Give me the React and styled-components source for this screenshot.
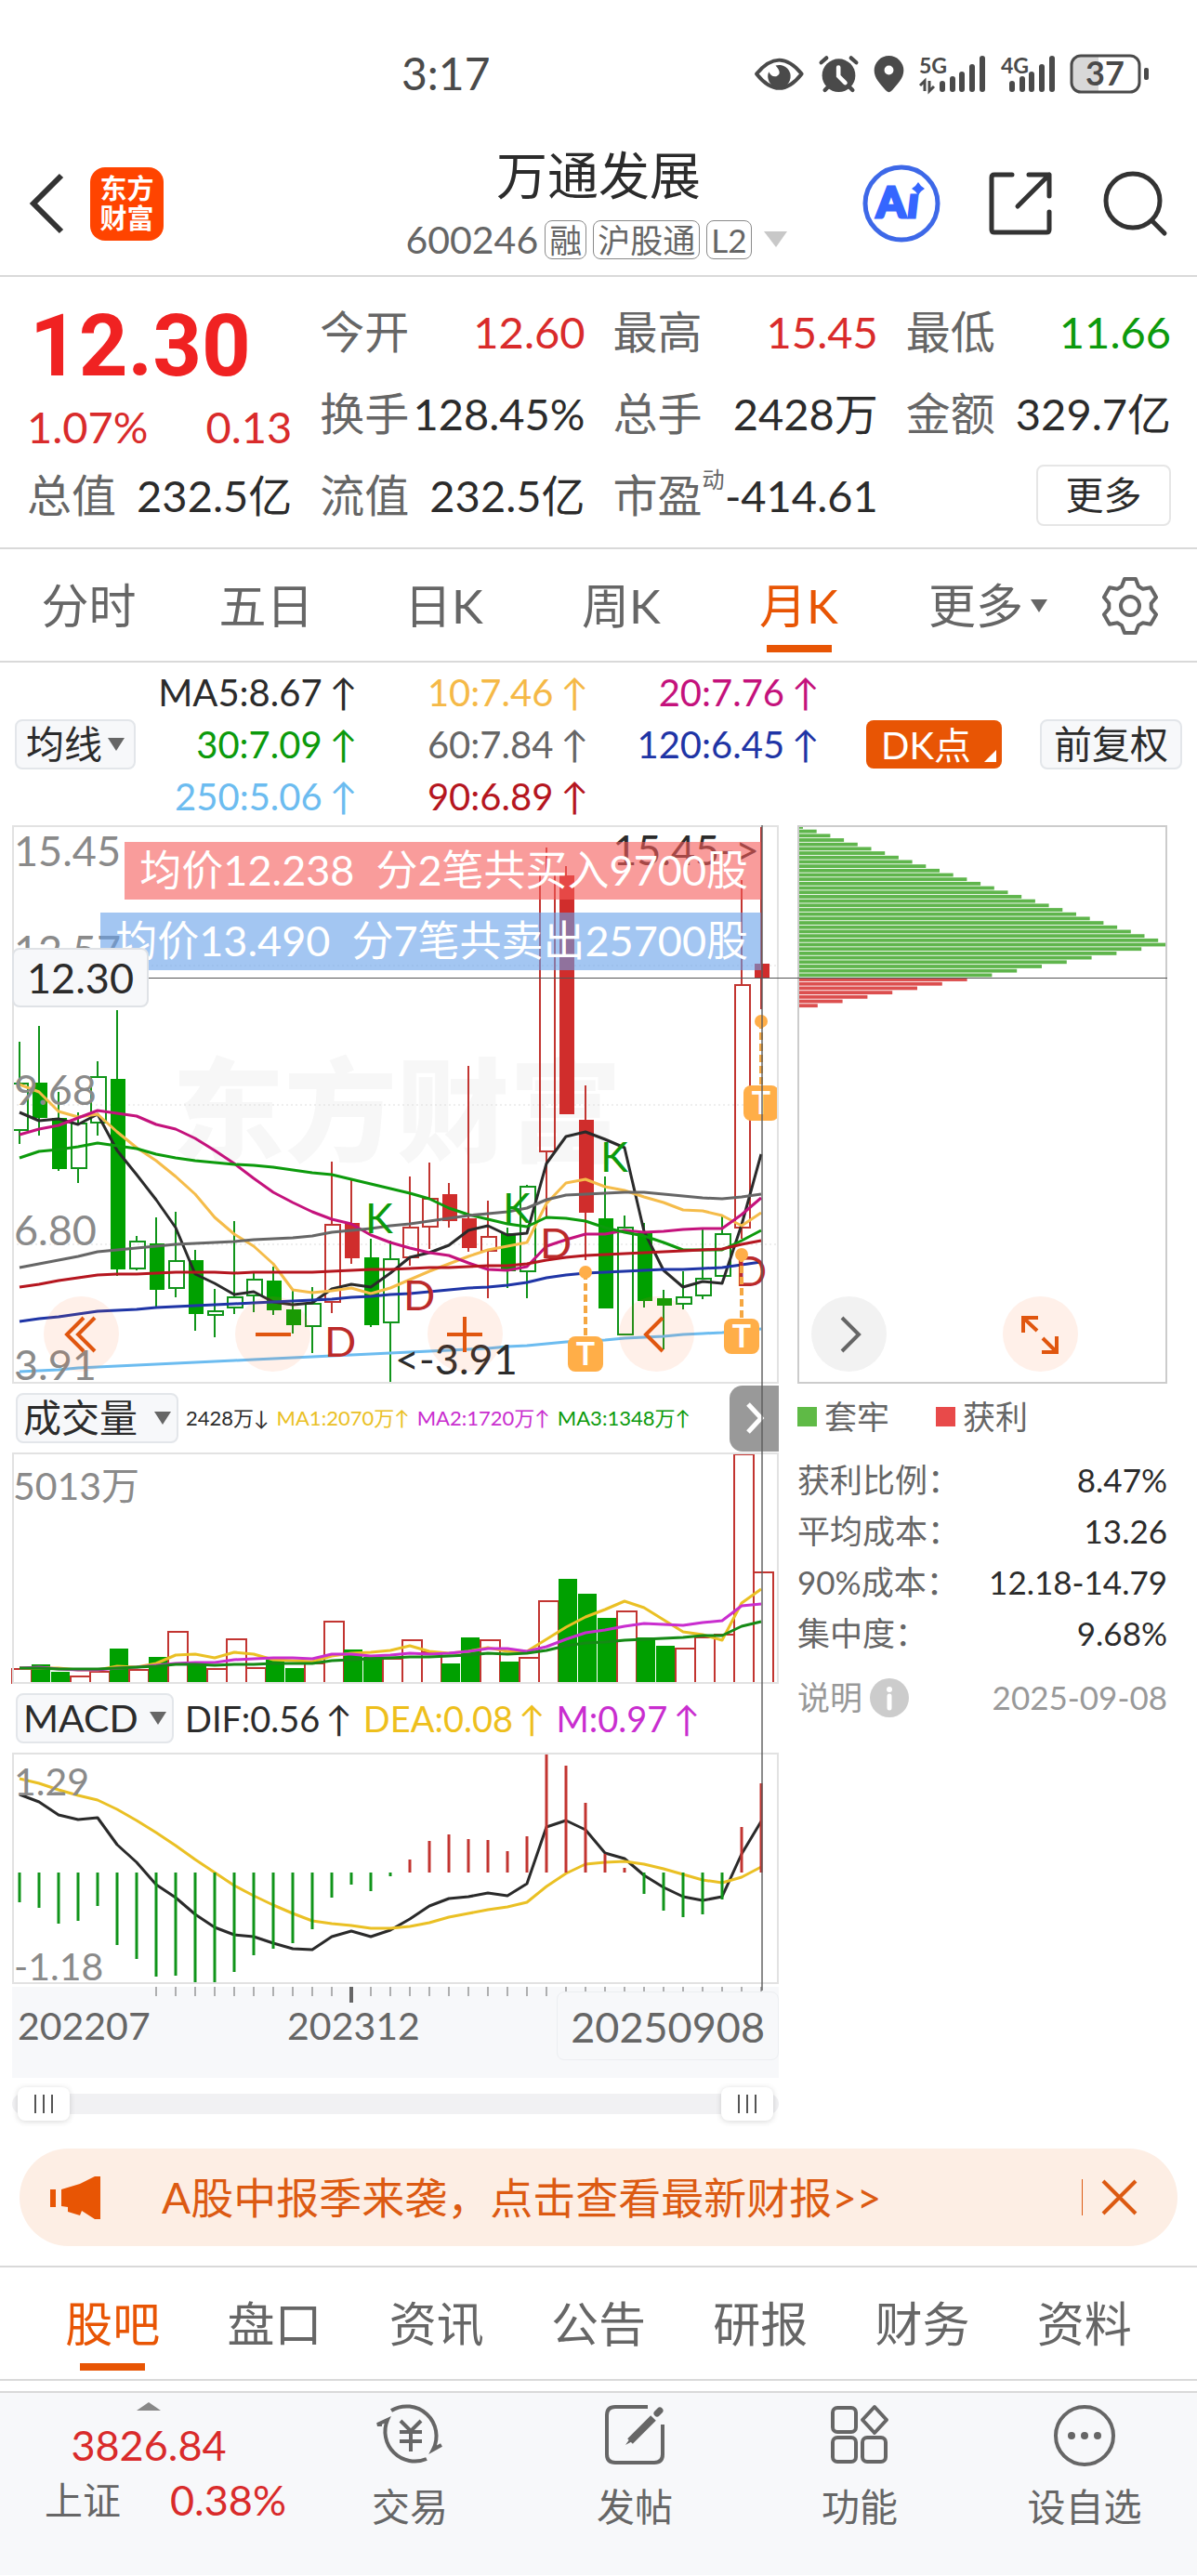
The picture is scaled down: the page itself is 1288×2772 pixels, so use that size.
import React, { useState } from 'react';
import styled, { createGlobalStyle, css } from 'styled-components';

const RED = '#d92b2b';
const GREEN = '#0c9a0c';
const ORANGE = '#e85504';
const DARK = '#2b2b2b';
const GRAY = '#666666';

const GlobalStyle = createGlobalStyle`
  * {
    box-sizing: border-box;
  }
  body {
    margin: 0;
    background: #ffffff;
    color: ${DARK};
    font-family: Lato, 'Liberation Sans', 'Noto Sans CJK SC', sans-serif;
  }
  button, select, input {
    font: inherit;
    color: inherit;
    margin: 0;
    padding: 0;
    border: 0;
    background: none;
  }
  a {
    color: inherit;
    text-decoration: none;
  }
  svg {
    display: block;
    flex: none;
    overflow: visible;
  }
`;

/* ---------- status bar ---------- */

const StatusBar = styled.div`
  display: flex;
  align-items: center;
  justify-content: space-between;
  height: 158px;
  padding: 0 51px 0 432px;
  color: #4a4a4a;
  font-size: 48px;
  line-height: 56px;
`;

const StatusIcons = styled.div`
  display: flex;
  align-items: center;
  gap: 16px;
`;

function StatusGlyphs() {
  return (
    <StatusIcons>
      <svg width="53" height="43" viewBox="45 50 160 130" fill="none">
        <path d="M51 115Q125 25 198 115Q125 208 51 115Z" stroke="#4a4a4a" strokeWidth="12" strokeLinejoin="round" />
        <path d="M113 88a37 37 0 1 1-22 20q8 18 24 15q22-8 -2-35z" fill="#4a4a4a" />
      </svg>
      <svg width="43" height="43" viewBox="250 50 130 130" fill="none" strokeLinecap="round">
        <circle cx="315" cy="120" r="54" fill="#4a4a4a" />
        <path d="M258 78L275 63M372 78L355 63M270 168L282 156M360 168L348 156" stroke="#4a4a4a" strokeWidth="13" />
        <path d="M314 94V122L336 144" stroke="#fff" strokeWidth="14" />
      </svg>
      <svg width="33" height="43" viewBox="424 50 100 130">
        <path fillRule="evenodd" fill="#4a4a4a" d="M474 56a48 48 0 0 1 48 48c0 26-20 44-37 64q-11 13-22 0c-17-20-37-38-37-64a48 48 0 0 1 48-48zm0 32a15 15 0 1 0 0 30a15 15 0 0 0 0-30z" />
      </svg>
      <svg width="72" height="43" viewBox="0 0 72 43">
        <text x="0" y="21" fontSize="23" fontWeight="700" fill="#4a4a4a">5G</text>
        <path d="M6 40V29L1 34M11 29V40L16 35" stroke="#4a4a4a" strokeWidth="3" fill="none" />
        <path d="M25 32V38M36 27V38M46 22V38M57 14V38M68 5V38" stroke="#4a4a4a" strokeWidth="6" strokeLinecap="round" />
      </svg>
      <svg width="58" height="43" viewBox="0 0 58 43">
        <text x="0" y="21" fontSize="23" fontWeight="700" fill="#4a4a4a">4G</text>
        <path d="M12 32V38M23 27V38M33 22V38M44 14V38M55 5V38" stroke="#4a4a4a" strokeWidth="6" strokeLinecap="round" />
      </svg>
      <svg width="86" height="43" viewBox="0 0 86 43">
        <path d="M12 2H31V41H12Q2 41 2 31V12Q2 2 12 2Z" fill="#d8d8d8" />
        <rect x="2" y="2" width="73" height="39" rx="10" fill="none" stroke="#4a4a4a" strokeWidth="3" />
        <rect x="80" y="15" width="5" height="13" rx="2" fill="#4a4a4a" />
        <text x="38" y="34" fontSize="36" fontWeight="700" textAnchor="middle" fill="#4a4a4a">37</text>
      </svg>
    </StatusIcons>
  );
}

/* ---------- header ---------- */

const Header = styled.header`
  display: grid;
  grid-template-columns: 1fr auto 1fr;
  align-items: center;
  height: 140px;
  padding: 0 32px;
  border-bottom: 2px solid #d9d9d9;
`;

const HeaderSide = styled.div`
  display: flex;
  align-items: center;
  justify-content: ${(p) => (p.$end ? 'flex-end' : 'flex-start')};
  gap: ${(p) => (p.$end ? '52px' : '29px')};
  padding-bottom: 16px;
`;

const IconButton = styled.button`
  display: flex;
  cursor: pointer;
`;

const Brand = styled.div`
  display: flex;
  flex-direction: column;
  align-items: center;
  justify-content: center;
  width: 79px;
  height: 79px;
  border-radius: 16px;
  background: #ff4400;
  color: #fff;
  font-size: 29px;
  font-weight: 700;
  line-height: 32px;
`;

const Title = styled.h1`
  margin: 0;
  font-size: 55px;
  font-weight: 400;
  line-height: 60px;
  text-align: center;
`;

const SubTitle = styled.div`
  display: flex;
  align-items: center;
  gap: 7px;
  height: 44px;
  margin: 18px 0 16px;
  color: ${GRAY};
  font-size: 41px;
  line-height: 44px;
`;

const Badge = styled.span`
  height: 42px;
  padding: 0 4px;
  border: 1px solid #8a8a8a;
  border-radius: 8px;
  font-size: 35px;
  line-height: 40px;
`;

function TopHeader() {
  return (
    <Header>
      <HeaderSide>
        <IconButton aria-label="返回">
          <svg width="36" height="64" viewBox="0 0 36 64" fill="none" stroke="#333" strokeWidth="6">
            <path d="M34 2L4 32L34 62" />
          </svg>
        </IconButton>
        <Brand>
          <span>东方</span>
          <span>财富</span>
        </Brand>
      </HeaderSide>
      <div>
        <Title>万通发展</Title>
        <SubTitle>
          <span>600246</span>
          <Badge>融</Badge>
          <Badge>沪股通</Badge>
          <Badge>L2</Badge>
          <svg width="36" height="18" viewBox="-6 0 36 18">
            <path d="M0 0H25L13 17Z" fill="#c8c8c8" />
          </svg>
        </SubTitle>
      </div>
      <HeaderSide $end>
        <IconButton aria-label="AI">
          <svg width="84" height="84" viewBox="0 0 84 84">
            <circle cx="42" cy="42" r="39" fill="none" stroke="#3d68e8" strokeWidth="5" />
            <g fill="#3566ff" fontFamily="Lato" fontWeight="900" fontSize="45">
              <text x="15" y="57" stroke="#3566ff" strokeWidth="3">A</text>
              <text x="49" y="57" stroke="#3566ff" strokeWidth="3" fontStyle="italic">ı</text>
            </g>
            <path d="M60 19L63 23L67 26L63 29L60 33L57 29L53 26L57 23Z" fill="#3566ff" />
          </svg>
        </IconButton>
        <IconButton aria-label="分享">
          <svg width="68" height="68" viewBox="0 0 68 68" fill="none" stroke="#333" strokeWidth="5" strokeLinecap="round" strokeLinejoin="round">
            <path d="M25 3H6Q3 3 3 6V62Q3 65 6 65H62Q65 65 65 62V43M43 3H65V26M65 3L31 37" />
          </svg>
        </IconButton>
        <IconButton aria-label="搜索">
          <svg width="72" height="70" viewBox="0 0 72 70" fill="none" stroke="#333" strokeWidth="5" strokeLinecap="round">
            <circle cx="35" cy="32" r="29" />
            <path d="M56 54L69 67" />
          </svg>
        </IconButton>
      </HeaderSide>
    </Header>
  );
}

/* ---------- quote ---------- */

const Quote = styled.section`
  display: grid;
  grid-template-columns: repeat(4, 1fr);
  grid-auto-rows: 88px;
  column-gap: 30px;
  padding: 15px 28px 12px 29px;
  border-bottom: 2px solid #d9d9d9;
`;

const Price = styled.div`
  grid-row: span 2;
  display: flex;
  flex-direction: column;
  color: ${RED};
`;

const LastPrice = styled.strong`
  padding: 14px 0 0 3px;
  color: #f02222;
  font-family: Roboto, sans-serif;
  font-size: 92px;
  font-weight: 700;
  line-height: 92px;
`;

const Change = styled.div`
  display: flex;
  justify-content: space-between;
  padding-top: 10px;
  font-size: 47px;
  line-height: 60px;
`;

const Stat = styled.div`
  display: flex;
  align-items: center;
  justify-content: space-between;
  white-space: nowrap;
  font-size: 48px;
  line-height: 60px;

  b {
    color: ${(p) => p.$color || DARK};
    font-size: 47px;
    font-weight: 400;
  }
  span {
    color: ${GRAY};
  }
  sup {
    color: ${GRAY};
    font-size: 24px;
    line-height: 24px;
    vertical-align: 26px;
  }
`;

const MoreButton = styled.button`
  align-self: center;
  justify-self: end;
  width: 145px;
  height: 66px;
  border: 2px solid #e6e6e6;
  border-radius: 8px;
  font-size: 41px;
  line-height: 60px;
`;

/* ---------- tabs ---------- */

const PeriodTabs = styled.nav`
  display: grid;
  grid-template-columns: repeat(5, 191fr) 216fr 90fr;
  height: 122px;
  padding-right: 27px;
  border-bottom: 2px solid #d9d9d9;
`;

const NewsTabs = styled.nav`
  display: grid;
  grid-template-columns: repeat(7, 1fr);
  height: 124px;
  padding: 0 34px;
  border: solid #d9d9d9;
  border-width: 2px 0;
`;

const Tab = styled.button`
  display: flex;
  align-items: center;
  justify-content: center;
  gap: 8px;
  padding-top: 2px;
  color: ${GRAY};
  font-size: 51px;
  line-height: 60px;
  cursor: pointer;
  ${(p) =>
    p.$active &&
    css`
      color: ${ORANGE};
      background: linear-gradient(${ORANGE}, ${ORANGE}) center bottom 9px / 70px 8px no-repeat;
    `}
`;

const periods = ['分时', '五日', '日K', '周K', '月K'];
const newsTabs = ['股吧', '盘口', '资讯', '公告', '研报', '财务', '资料'];

// six teeth, walked clockwise from the top one
const gearPoints = Array.from({ length: 6 }, (_, k) => {
  const a = (k * Math.PI) / 3;
  return [[-9, -21], [-6, -29], [6, -29], [9, -21]]
    .map(([x, y]) => [x * Math.cos(a) - y * Math.sin(a), x * Math.sin(a) + y * Math.cos(a)])
    .map((p) => p.map((n) => n.toFixed(1)).join(','))
    .join(' ');
}).join(' ');

const Caret = ({ size = 18, color = GRAY }) => (
  <svg width={size} height={size - 4} viewBox="0 0 18 14">
    <path d="M0 0H18L9 14Z" fill={color} />
  </svg>
);

/* ---------- indicator bar ---------- */

const AverageBar = styled.div`
  display: grid;
  grid-template-columns: auto 1fr auto auto;
  align-items: center;
  height: 175px;
  padding: 0 16px;
  font-size: 40px;
`;

const SelectBox = styled.label`
  position: relative;
  display: flex;
  flex: none;
  align-items: center;
  gap: ${(p) => p.$gap || 6}px;
  height: 54px;
  padding: 0 ${(p) => (p.$gap ? 6 : 10)}px;
  border: 2px solid #e3e6ea;
  border-radius: 8px;
  background: #f7f8fa;
  font-size: 41px;

  select {
    appearance: none;
    line-height: 50px;
    outline: none;
  }
`;

const AverageList = styled.div`
  display: grid;
  grid-template-columns: 238fr 248fr 248fr;
  margin-right: 50px;
  line-height: 56px;
  text-align: right;
`;

const Reading = styled.span`
  display: inline-flex;
  justify-content: flex-end;
  gap: ${(p) => p.$gap ?? 8}px;
  color: ${(p) => p.$color};
  white-space: nowrap;
`;

const DkButton = styled.button`
  display: flex;
  align-items: flex-end;
  gap: 14px;
  height: 52px;
  margin-right: 41px;
  padding: 0 6px 0 16px;
  border-radius: 8px;
  background: ${ORANGE};
  color: #fff;
  line-height: 50px;

  svg {
    margin-bottom: 7px;
  }
`;

const AdjustButton = styled.button`
  height: 54px;
  padding: 0 13px;
  border: 2px solid #e3e6ea;
  border-radius: 8px;
  background: #f7f8fa;
  font-size: 41px;
  line-height: 48px;
`;

const averages = [
  ['MA5:8.67', DARK],
  ['10:7.46', '#f5b947'],
  ['20:7.76', '#c4127c'],
  ['30:7.09', GREEN],
  ['60:7.84', GRAY],
  ['120:6.45', '#1f35a6'],
  ['250:5.06', '#6cbcf0'],
  ['90:6.89', '#b5161f'],
];

/* ---------- chart data ---------- */

const STEP = 21;
const cx = (i) => 8 + STEP * i;

// [kind, high, top, bottom, low]; upper case is a solid body
const candles = [
  ['g', 233, 277, 329, 343], ['G', 216, 277, 315, 334], ['G', 287, 315, 370, 372], ['g', 309, 320, 370, 385],
  ['g', 254, 270, 321, 334], ['G', 199, 273, 478, 485], ['g', 442, 447, 478, 479], ['G', 422, 450, 500, 518],
  ['g', 416, 468, 499, 508], ['G', 457, 468, 526, 544], ['g', 499, 522, 528, 551], ['g', 426, 507, 520, 526],
  ['g', 482, 488, 507, 524], ['G', 475, 490, 522, 527], ['G', 501, 521, 538, 547], ['g', 497, 514, 540, 568],
  ['r', 362, 429, 514, 525], ['R', 381, 428, 466, 472], ['G', 445, 465, 538, 540], ['g', 447, 466, 536, 601],
  ['r', 378, 432, 466, 474], ['r', 363, 401, 433, 456], ['R', 385, 397, 426, 433], ['R', 259, 423, 455, 459],
  ['r', 404, 442, 459, 509], ['G', 433, 439, 480, 498], ['g', 387, 388, 481, 509], ['r', 24, 51, 352, 423],
  ['R', 44, 54, 311, 311], ['R', 280, 317, 417, 468], ['G', 378, 423, 520, 520], ['g', 420, 432, 549, 549],
  ['G', 428, 439, 512, 519], ['G', 500, 509, 517, 564], ['g', 480, 507, 516, 521], ['g', 433, 487, 507, 510],
  ['g', 421, 439, 486, 486], ['r', 59, 171, 434, 445], ['R', 0, 149, 164, 198],
];

const priceLines = [
  ['#2a2a2a', [309, 318, 316, 322, 311, 350, 376, 403, 433, 483, 493, 505, 502, 513, 516, 514, 499, 494, 497, 482, 465, 460, 452, 436, 431, 441, 439, 364, 335, 330, 338, 347, 437, 479, 497, 491, 493, 430, 354]],
  ['#f5bc4a', [279, 287, 308, 314, 311, 330, 347, 361, 378, 397, 422, 440, 453, 472, 500, 503, 501, 498, 504, 498, 489, 480, 472, 464, 457, 453, 449, 407, 385, 381, 389, 393, 400, 406, 414, 415, 420, 431, 417]],
  ['#c4127c', [333, 327, 323, 315, 307, 310, 313, 322, 327, 337, 350, 364, 380, 395, 406, 416, 424, 429, 441, 449, 455, 460, 463, 471, 478, 479, 475, 453, 446, 440, 440, 436, 438, 437, 435, 434, 434, 419, 401]],
  ['#0c9a0c', [358, 351, 349, 346, 342, 345, 348, 354, 358, 361, 363, 365, 366, 368, 371, 374, 376, 381, 386, 391, 396, 402, 412, 419, 424, 429, 432, 422, 423, 426, 433, 438, 442, 449, 457, 457, 457, 447, 436]],
  ['#666666', [476, 472, 468, 464, 459, 457, 455, 453, 451, 450, 449, 448, 446, 445, 444, 442, 438, 436, 434, 431, 429, 426, 423, 420, 418, 416, 412, 403, 398, 397, 396, 395, 395, 397, 399, 401, 402, 400, 397]],
  ['#b5161f', [497, 494, 490, 487, 484, 483, 483, 482, 481, 481, 481, 482, 481, 481, 481, 481, 480, 479, 478, 478, 477, 476, 476, 475, 474, 474, 472, 468, 465, 463, 462, 461, 460, 459, 458, 457, 456, 451, 447]],
  ['#1f35a6', [534, 531, 529, 526, 523, 522, 521, 519, 518, 517, 516, 515, 514, 513, 512, 511, 510, 508, 507, 505, 504, 502, 500, 498, 497, 495, 492, 487, 484, 482, 481, 480, 479, 478, 478, 477, 476, 473, 470]],
  ['#6cbcf0', [588, 587, 586, 584, 583, 582, 581, 580, 579, 578, 577, 576, 575, 574, 573, 572, 571, 570, 569, 568, 567, 566, 565, 564, 563, 561, 560, 558, 556, 555, 554, 552, 551, 550, 548, 547, 546, 544, 542]],
];

const volumeKinds = 'rggrrgrgrgrrrggrrggrrrggrgrrgggrggrrrrr';
const volumeTops = [232, 228, 236, 240, 235, 211, 233, 220, 192, 229, 232, 200, 231, 223, 232, 226, 181, 212, 220, 221, 201, 214, 227, 199, 201, 225, 220, 159, 136, 152, 178, 170, 199, 208, 210, 198, 195, 1, 128];
const volumeLines = [
  ['#eac024', [232, 232, 232, 234, 234, 230, 231, 227, 218, 217, 221, 215, 217, 223, 224, 225, 219, 216, 215, 213, 208, 214, 216, 214, 210, 214, 214, 201, 188, 177, 169, 160, 167, 180, 193, 196, 202, 162, 147]],
  ['#c92ecf', [232, 231, 233, 234, 234, 232, 231, 229, 227, 226, 226, 223, 222, 221, 221, 222, 217, 217, 219, 218, 216, 217, 216, 214, 211, 211, 214, 209, 201, 194, 191, 187, 184, 185, 186, 183, 181, 165, 163]],
  ['#158a15', [232, 232, 233, 233, 233, 232, 231, 230, 228, 228, 229, 228, 228, 227, 227, 227, 224, 223, 222, 221, 220, 220, 219, 218, 216, 217, 216, 213, 208, 205, 204, 202, 201, 200, 199, 197, 197, 187, 182]],
];

const MACD_ZERO = 129;
const macdBars = [161, 167, 184, 181, 165, 207, 222, 241, 240, 249, 247, 236, 218, 211, 205, 190, 156, 142, 149, 133, 115, 95, 88, 93, 94, 106, 90, 0, 14, 54, 109, 124, 152, 170, 177, 174, 158, 80, 33];
const macdLines = [
  ['#2a2a2a', [45, 53, 67, 72, 70, 99, 118, 142, 156, 174, 188, 196, 198, 205, 211, 212, 198, 192, 198, 191, 179, 165, 157, 155, 151, 154, 141, 80, 73, 83, 108, 114, 132, 145, 155, 159, 155, 109, 74]],
  ['#eac024', [28, 33, 40, 46, 51, 61, 73, 86, 100, 115, 129, 143, 154, 164, 173, 181, 184, 186, 189, 189, 187, 183, 177, 173, 169, 166, 161, 144, 130, 120, 118, 117, 120, 125, 131, 137, 140, 134, 123]],
];

const marks = [
  ['K', 382, 439], ['K', 530, 428], ['K', 635, 373],
  ['D', 338, 572], ['D', 423, 522], ['D', 570, 466], ['D', 780, 496],
];

// [x, dot y, box y]
const trades = [[806, 211, 280], [617, 481, 550], [785, 462, 531]];

const Line = ({ color, values }) => (
  <polyline
    points={values.map((v, i) => `${cx(i)},${v}`).join(' ')}
    fill="none"
    stroke={color}
    strokeWidth="3"
    strokeLinejoin="round"
  />
);

/* ---------- chart layout ---------- */

const Charts = styled.section`
  position: relative;
  display: grid;
  grid-template-columns: minmax(0, 825fr) minmax(0, 398fr);
  column-gap: 20px;
  padding: 0 32px 0 13px;
`;

const Frame = styled.div`
  position: relative;
  outline: 2px solid ${(p) => p.$line || '#e2e2e2'};
  outline-offset: -2px;

  > svg {
    width: 100%;
    height: auto;
  }
`;

const Plots = styled.div`
  position: relative;
`;

const CrossV = styled.i`
  position: absolute;
  z-index: 1;
  top: 0;
  bottom: 94px;
  left: 97.7%;
  width: 2px;
  background: rgba(90, 90, 90, 0.7);
`;

const CrossH = styled.i`
  position: absolute;
  z-index: 1;
  top: 164px;
  left: 13px;
  right: 32px;
  height: 1px;
  background: #555;
`;

const PriceTag = styled.span`
  position: absolute;
  z-index: 2;
  top: 22%;
  left: 0;
  height: 64px;
  padding: 0 14px;
  border: 2px solid #dfe2e6;
  border-radius: 8px;
  background: #f7f8fa;
  font-size: 45px;
  line-height: 60px;
`;

const TradeNote = styled.div`
  position: absolute;
  top: ${(p) => (p.$sell ? '94px' : '18px')};
  right: 19px;
  height: 62px;
  padding: 0 14px 0 16px;
  background: ${(p) => (p.$sell ? 'rgba(102, 160, 233, 0.6)' : 'rgba(245, 90, 88, 0.6)')};
  color: #fff;
  font-size: 45px;
  line-height: 60px;
  white-space: pre;
`;

const ChartTools = styled.div`
  position: absolute;
  z-index: 3;
  top: 507px;
  left: 47px;
  right: 128px;
  display: flex;
  justify-content: space-between;
`;

const RoundButton = styled.button`
  display: flex;
  align-items: center;
  justify-content: center;
  width: 81px;
  height: 81px;
  border-radius: 50%;
  background: ${(p) => (p.$muted ? '#f2f2f2' : 'rgba(255, 110, 40, 0.1)')};
`;

const tools = [
  ['最早', 'M26 6L8 24L26 42M38 6L20 24L38 42'],
  ['缩小', 'M5 24H43'],
  ['放大', 'M5 24H43M24 5V43'],
  ['向左', 'M30 6L12 24L30 42'],
  ['向右', 'M17 6L35 24L17 42'],
  ['全屏', 'M6 22V6H22M6 6L21 20M42 26V43H26M42 43L27 28'],
];

const Toolbar = styled.div`
  display: flex;
  align-items: center;
  gap: ${(p) => p.$gap}px;
  height: 74px;
  padding-left: 4px;
  font-size: ${(p) => p.$size}px;
  line-height: 50px;
`;

const Expand = styled.button`
  display: flex;
  flex: none;
  align-items: center;
  justify-content: center;
  width: 53px;
  height: 71px;
  margin-left: auto;
  border-radius: 14px 0 0 14px;
  background: #999;
`;

const Axis = styled.div`
  position: relative;
  display: flex;
  justify-content: space-between;
  height: 98px;
  margin-top: 3px;
  padding: 5px 0 0 6px;
  background: #f7f8fa;
  color: ${GRAY};
  font-size: 41px;
  line-height: 74px;

  svg {
    position: absolute;
    top: 0;
    left: 0;
    width: 100%;
    height: auto;
  }
`;

const CurrentDate = styled.strong`
  position: relative;
  height: 74px;
  padding: 0 14px;
  border: 1px solid #eceef1;
  border-radius: 8px;
  background: #f7f8fa;
  font-size: 45px;
  font-weight: 400;
`;

const RangeTrack = styled.div`
  position: relative;
  height: 22px;
  margin-top: 17px;
  border-radius: 11px;
  background: #f1f1f3;
`;

const RangeInput = styled.input`
  position: absolute;
  top: -7px;
  left: 6px;
  width: calc(100% - 12px);
  height: 36px;
  appearance: none;
  pointer-events: none;

  &::-webkit-slider-thumb {
    appearance: none;
    width: 56px;
    height: 36px;
    border-radius: 8px;
    pointer-events: auto;
    box-shadow: 0 1px 6px rgba(0, 0, 0, 0.16);
    background:
      linear-gradient(#555, #555) 18px center / 2px 20px no-repeat,
      linear-gradient(#555, #555) 27px center / 2px 20px no-repeat,
      linear-gradient(#555, #555) 36px center / 2px 20px no-repeat,
      #fff;
  }
`;

const CostPanel = styled.div`
  color: ${GRAY};
  font-size: 35px;
  line-height: 55px;
`;

const Legend = styled.div`
  display: flex;
  gap: 50px;
  padding: 8px 0 13px;
`;

const LegendItem = styled.span`
  display: flex;
  align-items: center;
  gap: 8px;

  &::before {
    content: '';
    width: 21px;
    height: 21px;
    background: ${(p) => p.$color};
  }
`;

const CostRow = styled.div`
  display: flex;
  align-items: center;
  justify-content: space-between;
  white-space: nowrap;

  b {
    color: ${DARK};
    font-weight: 400;
  }
`;

const NoteRow = styled(CostRow)`
  margin-top: 14px;
  color: #999;

  span {
    display: flex;
    align-items: center;
    gap: 8px;
  }
`;

const costs = [
  ['获利比例：', '8.47%'],
  ['平均成本：', '13.26'],
  ['90%成本：', '12.18-14.79'],
  ['集中度：', '9.68%'],
];

function PriceChart() {
  return (
    <Frame>
      <svg viewBox="0 0 825 601">
        <text x="172" y="352" fontSize="121" fontWeight="900" fill="#f7f7f7">东方财富</text>
        {[151, 301, 451].map((y) => (
          <path key={y} d={`M0 ${y}H825`} stroke="#dedede" strokeWidth="1" strokeDasharray="2 3" />
        ))}
        {candles.map(([kind, high, top, bottom, low], i) => {
          const up = kind.toLowerCase() === 'r';
          const color = up ? '#c23531' : '#10941a';
          const solid = kind === kind.toUpperCase();
          return (
            <g key={i} stroke={color} strokeWidth="2">
              <path d={`M${cx(i)} ${high}V${top}M${cx(i)} ${bottom}V${low}`} />
              {solid ? (
                <rect x={cx(i) - 7} y={top} width="16" height={bottom - top} fill={up ? '#d02d2c' : '#00a000'} stroke="none" />
              ) : (
                <rect x={cx(i) - 7} y={top + 1} width="16" height={Math.max(bottom - top - 2, 2)} fill="none" />
              )}
            </g>
          );
        })}
        {priceLines.map(([color, values]) => <Line key={color} color={color} values={values} />)}
        <g fontSize="45">
          {marks.map(([letter, x, y]) => (
            <text key={x} x={x - 2} y={y} fill={letter === 'K' ? GREEN : '#bb2a2a'}>{letter}</text>
          ))}
        </g>
        <g fontSize="45" fill="#8a8a8a">
          <text x="2" y="44">15.45</text>
          <text x="2" y="151">12.57</text>
          <text x="2" y="301">9.68</text>
          <text x="2" y="452">6.80</text>
          <text x="2" y="597">3.91</text>
        </g>
        <g fontSize="45" fill={DARK}>
          <text x="804" y="43" textAnchor="end">15.45-&gt;</text>
          <text x="412" y="591">&lt;-3.91</text>
        </g>
        {trades.map(([x, dot, box]) => (
          <g key={x}>
            <path d={`M${x} ${dot}V${box}`} stroke="#f5a742" strokeWidth="4" strokeDasharray="8 4" />
            <circle cx={x} cy={dot} r="7" fill="#ffae48" />
            <rect x={x - 19} y={box} width="38" height="38" rx="8" fill="#ffae48" />
            <text x={x} y={box + 31} fontSize="34" fontWeight="700" textAnchor="middle" fill="#fff">T</text>
          </g>
        ))}
      </svg>
      <TradeNote>均价12.238  分2笔共买入9700股</TradeNote>
      <TradeNote $sell>均价13.490  分7笔共卖出25700股</TradeNote>
      <PriceTag>12.30</PriceTag>
    </Frame>
  );
}

function VolumeChart() {
  return (
    <Frame>
      <svg viewBox="0 0 825 249">
        {volumeTops.map((top, i) =>
          volumeKinds[i] === 'g' ? (
            <rect key={i} x={cx(i) - 8} y={top} width="20" height={249 - top} fill="#00a000" />
          ) : (
            <rect key={i} x={cx(i) - 8} y={top + 1} width="21" height={247 - top} fill="#fff" stroke="#c23531" strokeWidth="2" />
          )
        )}
        {volumeLines.map(([color, values]) => <Line key={color} color={color} values={values} />)}
        <text x="1" y="51" fontSize="41" fill="#8a8a8a">5013万</text>
      </svg>
    </Frame>
  );
}

function MacdChart() {
  return (
    <Frame>
      <svg viewBox="0 0 825 249">
        {macdLines.map(([color, values]) => <Line key={color} color={color} values={values} />)}
        {macdBars.map((v, i) => (
          <path key={i} d={`M${cx(i)} ${MACD_ZERO}V${v}`} stroke={v > MACD_ZERO ? '#10941a' : '#c23531'} strokeWidth="3" />
        ))}
        <text x="2" y="46" fontSize="41" fill="#8a8a8a">1.29</text>
        <text x="2" y="245" fontSize="41" fill="#8a8a8a">-1.18</text>
      </svg>
    </Frame>
  );
}

function CostChart() {
  const rows = Array.from({ length: 42 }, (_, i) => (i < 27 ? 5 + 14.7 * i : 396 - 26.8 * (i - 27)));
  return (
    <Frame $line="#cccccc">
      <svg viewBox="0 0 398 601">
        {rows.map((w, i) => (
          <rect key={i} x="1" y={4.69 * i} width={w} height="3.8" fill={i < 35 ? '#5fb54c' : '#dc4f4f'} />
        ))}
      </svg>
    </Frame>
  );
}

/* ---------- promo and bottom bar ---------- */

const Promo = styled.div`
  display: flex;
  align-items: center;
  height: 105px;
  margin: 37px 21px 21px;
  padding: 0 43px 0 33px;
  border-radius: 53px;
  background: #fdeee4;
  color: #dc5a12;
  font-size: 46px;
  line-height: 60px;

  a {
    flex: 1;
    margin-left: 64px;
  }
`;

const CloseButton = styled.button`
  display: flex;
  padding-left: 20px;
  border-left: 1px solid #dc5a12;
`;

const BottomBar = styled.footer`
  display: grid;
  grid-template-columns: 320fr repeat(4, 242fr);
  height: 198px;
  margin-top: 11px;
  border-top: 2px solid #d9d9d9;
  background: #f7f8fa;
  color: ${GRAY};
  font-size: 41px;
`;

const IndexCard = styled.div`
  display: flex;
  flex-direction: column;
  align-items: center;
  padding-top: 10px;
  line-height: 59px;

  svg {
    margin-bottom: 8px;
  }
`;

const IndexValue = styled.span`
  color: ${RED};
  font-size: 45px;
`;

const IndexRow = styled.div`
  display: flex;
  justify-content: space-between;
  align-self: stretch;
  padding: 0 12px 0 48px;
`;

const NavButton = styled.button`
  display: flex;
  flex-direction: column;
  align-items: center;
  gap: 13px;
  padding-top: 10px;
  line-height: 56px;
`;

const navItems = [
  ['交易', (
    <>
      <path d="M17 9A32 32 0 0 1 62 51L71 46M7 24L2 24L13 19A32 32 0 0 0 55 61" transform="translate(-1 0)" />
      <path d="M26 20L37 31L48 20M25 32H49M25 42H49M37 31V53" />
    </>
  )],
  ['发帖', (
    <>
      <path d="M50 5H15Q6 5 6 14V56Q6 65 15 65H57Q66 65 66 56V24" />
      <path d="M56 17L31 42" strokeWidth="8" />
      <path d="M33 36L26 46L37 40Z" fill={GRAY} stroke="none" />
      <path d="M60 12L63 9" strokeWidth="7" strokeLinecap="round" />
    </>
  )],
  ['功能', (
    <>
      <rect x="7" y="6" width="25" height="26" rx="5" />
      <rect x="7" y="38" width="25" height="26" rx="5" />
      <rect x="39" y="38" width="25" height="26" rx="5" />
      <path d="M52 5L65 19L52 33L39 19Z" strokeLinejoin="round" />
    </>
  )],
  ['设自选', (
    <>
      <circle cx="36" cy="36" r="31" />
      <g fill={GRAY} stroke="none">
        <circle cx="22" cy="36" r="4" />
        <circle cx="36" cy="36" r="4" />
        <circle cx="50" cy="36" r="4" />
      </g>
    </>
  )],
];

export default function App() {
  const [period, setPeriod] = useState('月K');
  const [news, setNews] = useState('股吧');

  return (
    <>
      <GlobalStyle />
      <StatusBar>
        <span>3:17</span>
        <StatusGlyphs />
      </StatusBar>
      <TopHeader />

      <Quote>
        <Price>
          <LastPrice>12.30</LastPrice>
          <Change>
            <span>1.07%</span>
            <span>0.13</span>
          </Change>
        </Price>
        <Stat $color={RED}><span>今开</span><b>12.60</b></Stat>
        <Stat $color={RED}><span>最高</span><b>15.45</b></Stat>
        <Stat $color={GREEN}><span>最低</span><b>11.66</b></Stat>
        <Stat><span>换手</span><b>128.45%</b></Stat>
        <Stat><span>总手</span><b>2428万</b></Stat>
        <Stat><span>金额</span><b>329.7亿</b></Stat>
        <Stat><span>总值</span><b>232.5亿</b></Stat>
        <Stat><span>流值</span><b>232.5亿</b></Stat>
        <Stat><span>市盈<sup>动</sup></span><b>-414.61</b></Stat>
        <MoreButton>更多</MoreButton>
      </Quote>

      <PeriodTabs>
        {periods.map((name) => (
          <Tab key={name} $active={name === period} onClick={() => setPeriod(name)}>{name}</Tab>
        ))}
        <Tab>更多<Caret /></Tab>
        <Tab aria-label="设置">
          <svg width="64" height="64" viewBox="-32 -32 64 64" fill="none" stroke={GRAY} strokeWidth="4" strokeLinejoin="round">
            <polygon points={gearPoints} />
            <circle r="10" />
          </svg>
        </Tab>
      </PeriodTabs>

      <AverageBar>
        <SelectBox>
          <select aria-label="主图指标"><option>均线</option></select>
          <Caret />
        </SelectBox>
        <AverageList>
          {averages.map(([text, color]) => (
            <Reading key={text} $color={color}>{text}<span>↑</span></Reading>
          ))}
        </AverageList>
        <DkButton>
          DK点
          <svg width="13" height="13" viewBox="0 0 13 13"><path d="M13 0V13H0Z" fill="#fff" /></svg>
        </DkButton>
        <AdjustButton>前复权</AdjustButton>
      </AverageBar>

      <Charts>
        <CrossH />
        <div>
          <Plots>
            <CrossV />
            <PriceChart />
            <Toolbar $size={22} $gap={8}>
              <SelectBox $gap={18}>
                <select aria-label="副图指标一"><option>成交量</option></select>
                <Caret />
              </SelectBox>
              <Reading $gap={0} $color={DARK}>2428万↓</Reading>
              <Reading $gap={0} $color="#eac024">MA1:2070万↑</Reading>
              <Reading $gap={0} $color="#c92ecf">MA2:1720万↑</Reading>
              <Reading $gap={0} $color={GREEN}>MA3:1348万↑</Reading>
              <Expand aria-label="展开">
                <svg width="20" height="34" viewBox="0 0 20 34" fill="none" stroke="#fff" strokeWidth="5">
                  <path d="M3 2L17 17L3 32" />
                </svg>
              </Expand>
            </Toolbar>
            <VolumeChart />
            <Toolbar $size={38} $gap={12}>
              <SelectBox $gap={12}>
                <select aria-label="副图指标二"><option>MACD</option></select>
                <Caret />
              </SelectBox>
              <Reading $gap={6} $color={DARK}>DIF:0.56<span>↑</span></Reading>
              <Reading $gap={6} $color="#eebf1c">DEA:0.08<span>↑</span></Reading>
              <Reading $gap={6} $color="#c92ecf">M:0.97<span>↑</span></Reading>
            </Toolbar>
            <MacdChart />
            <Axis>
              <svg viewBox="0 0 825 18">
                {candles.map((_, i) => i > 6 && (
                  <path key={i} d={`M${cx(i)} 0V${i === 17 ? 17 : 10}`} stroke={GRAY} strokeWidth={i === 17 ? 4 : 1} />
                ))}
              </svg>
              <span>202207</span>
              <span>202312</span>
              <CurrentDate>20250908</CurrentDate>
            </Axis>
          </Plots>
          <RangeTrack>
            <RangeInput type="range" aria-label="起始月份" defaultValue="0" />
            <RangeInput type="range" aria-label="结束月份" defaultValue="100" />
          </RangeTrack>
        </div>
        <CostPanel>
          <CostChart />
          <Legend>
            <LegendItem $color="#5fba46">套牢</LegendItem>
            <LegendItem $color="#e84a4a">获利</LegendItem>
          </Legend>
          {costs.map(([label, value]) => (
            <CostRow key={label}><span>{label}</span><b>{value}</b></CostRow>
          ))}
          <NoteRow>
            <span>
              说明
              <svg width="42" height="42" viewBox="0 0 42 42">
                <circle cx="21" cy="21" r="21" fill="#ccc" />
                <circle cx="21" cy="12" r="3" fill="#fff" />
                <path d="M21 19V32" stroke="#fff" strokeWidth="5" strokeLinecap="round" />
              </svg>
            </span>
            2025-09-08
          </NoteRow>
        </CostPanel>
        <ChartTools>
          {tools.map(([label, d], i) => (
            <RoundButton key={label} aria-label={label} $muted={i === 4}>
              <svg width="48" height="48" viewBox="0 0 48 48" fill="none" stroke={i === 4 ? GRAY : '#e0560f'} strokeWidth="4">
                <path d={d} />
              </svg>
            </RoundButton>
          ))}
        </ChartTools>
      </Charts>

      <Promo>
        <svg width="56" height="46" viewBox="0 0 56 46" fill={ORANGE}>
          <path d="M0 14H6V33H0ZM12 14L32 8L48 0H54V46H48L34 37L32 42L19 38V33L12 32Z" />
        </svg>
        <a href="#report">A股中报季来袭，点击查看最新财报&gt;&gt;</a>
        <CloseButton aria-label="关闭">
          <svg width="39" height="39" viewBox="0 0 39 39" stroke="#dc5a12" strokeWidth="4">
            <path d="M2 2L37 37M37 2L2 37" />
          </svg>
        </CloseButton>
      </Promo>

      <NewsTabs>
        {newsTabs.map((name) => (
          <Tab key={name} $active={name === news} onClick={() => setNews(name)}>{name}</Tab>
        ))}
      </NewsTabs>

      <BottomBar>
        <IndexCard>
          <svg width="26" height="9" viewBox="0 0 26 9"><path d="M0 9L13 0L26 9Z" fill="#888" /></svg>
          <IndexValue>3826.84</IndexValue>
          <IndexRow>
            上证
            <IndexValue>0.38%</IndexValue>
          </IndexRow>
        </IndexCard>
        {navItems.map(([label, icon]) => (
          <NavButton key={label}>
            <svg width="72" height="72" viewBox="0 0 72 72" fill="none" stroke={GRAY} strokeWidth="4">{icon}</svg>
            {label}
          </NavButton>
        ))}
      </BottomBar>
    </>
  );
}
